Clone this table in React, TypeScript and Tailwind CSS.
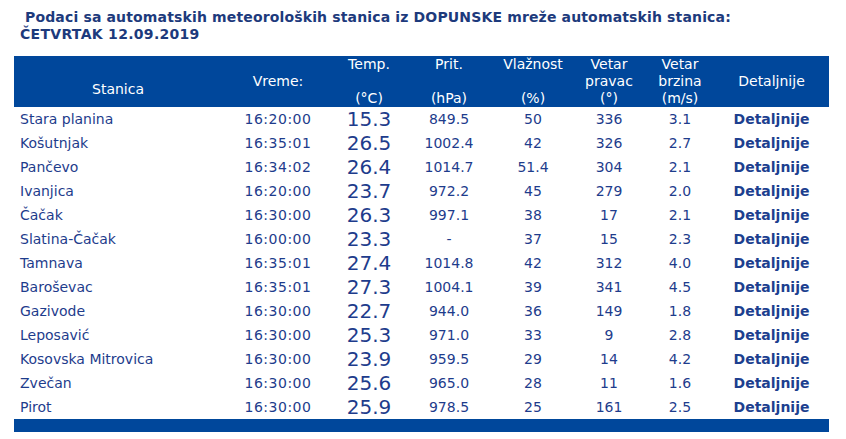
const rows: [string, string, string, string, string, string, string][] = [
  ['Stara planina', '16:20:00', '15.3', '849.5', '50', '336', '3.1'],
  ['Košutnjak', '16:35:01', '26.5', '1002.4', '42', '326', '2.7'],
  ['Pančevo', '16:34:02', '26.4', '1014.7', '51.4', '304', '2.1'],
  ['Ivanjica', '16:20:00', '23.7', '972.2', '45', '279', '2.0'],
  ['Čačak', '16:30:00', '26.3', '997.1', '38', '17', '2.1'],
  ['Slatina-Čačak', '16:00:00', '23.3', '-', '37', '15', '2.3'],
  ['Tamnava', '16:35:01', '27.4', '1014.8', '42', '312', '4.0'],
  ['Baroševac', '16:35:01', '27.3', '1004.1', '39', '341', '4.5'],
  ['Gazivode', '16:30:00', '22.7', '944.0', '36', '149', '1.8'],
  ['Leposavić', '16:30:00', '25.3', '971.0', '33', '9', '2.8'],
  ['Kosovska Mitrovica', '16:30:00', '23.9', '959.5', '29', '14', '4.2'],
  ['Zvečan', '16:30:00', '25.6', '965.0', '28', '11', '1.6'],
  ['Pirot', '16:30:00', '25.9', '978.5', '25', '161', '2.5'],
]

const cols = 'grid grid-cols-[208px_112px_70px_90px_78px_74px_68px_115px]'

export default function App() {
  return (
    <div className="min-h-[439px] bg-white text-[14px] text-[#1e3c8c]" style={{ fontFamily: '"DejaVu Sans", Verdana, sans-serif' }}>
      <h1 className="pl-5 pt-[9px] text-[14px] font-bold leading-[17px] tracking-[0.15px] text-[#1d3a7c]">
        &nbsp;Podaci sa automatskih meteoroloških stanica iz DOPUNSKE mreže automatskih stanica:
        <br />
        <span className="tracking-[0.3px]">ČETVRTAK 12.09.2019</span>
      </h1>

      <div className="ml-[14px] mt-[13px] w-[815px]">
        <div className={`${cols} h-[51px] bg-[#00479b] text-center leading-[17px] text-white`}>
          <div className="pt-[25px]">Stanica</div>
          <div className="pt-[17px]">Vreme:</div>
          <div>Temp.<br /><br />(°C)</div>
          <div>Prit.<br /><br />(hPa)</div>
          <div>Vlažnost<br /><br />(%)</div>
          <div>Vetar<br />pravac<br />(°)</div>
          <div>Vetar<br />brzina<br />(m/s)</div>
          <div className="pt-[17px]">Detaljnije</div>
        </div>

        {rows.map(([name, time, temp, pres, hum, dir, speed]) => (
          <div key={name} className={`${cols} h-6 items-center text-center`}>
            <div className="pl-[6px] text-left">{name}</div>
            <div className="tracking-[0.5px]">{time}</div>
            <div className="text-[20px] leading-6">{temp}</div>
            <div>{pres}</div>
            <div>{hum}</div>
            <div>{dir}</div>
            <div>{speed}</div>
            <div className="font-bold text-[#1d3f8f]">Detaljnije</div>
          </div>
        ))}

        <div className="h-[13px] bg-[#00479b]" />
      </div>
    </div>
  )
}
